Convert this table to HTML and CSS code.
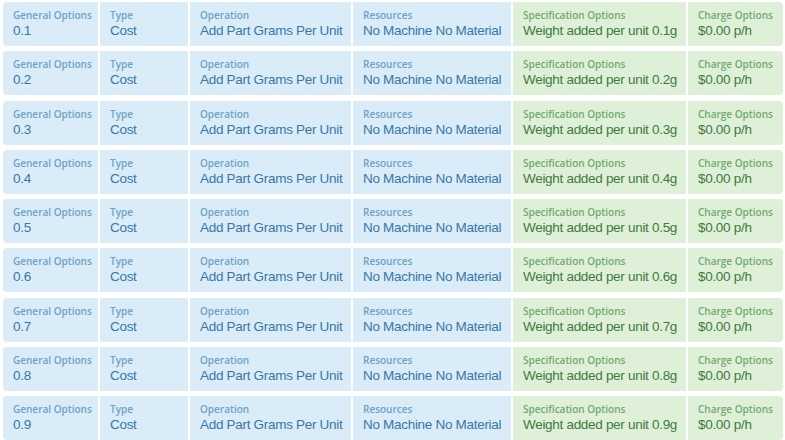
FILE: index.html
```html
<!DOCTYPE html>
<html>
<head>
<meta charset="utf-8">
<link rel="stylesheet" href="styles.css">
</head>
<body>
<div class="list" id="list"></div>
<script>
var rows = ["0.1","0.2","0.3","0.4","0.5","0.6","0.7","0.8","0.9"];
var html = "";
rows.forEach(function(v){
  html += '<div class="row">' +
    '<div class="cell info"><div class="lbl">General Options</div><div class="val">' + v + '</div></div>' +
    '<div class="cell info"><div class="lbl">Type</div><div class="val">Cost</div></div>' +
    '<div class="cell info"><div class="lbl">Operation</div><div class="val">Add Part Grams Per Unit</div></div>' +
    '<div class="cell info"><div class="lbl">Resources</div><div class="val">No Machine No Material</div></div>' +
    '<div class="cell ok"><div class="lbl">Specification Options</div><div class="val">Weight added per unit ' + v + 'g</div></div>' +
    '<div class="cell ok last"><div class="lbl">Charge Options</div><div class="val">$0.00 p/h</div></div>' +
    '</div>';
});
document.getElementById("list").innerHTML = html;
</script>
</body>
</html>
```
FILE: styles.css
```css
html, body { margin: 0; padding: 0; background: #fff; }
body { width: 785px; height: 440px; overflow: hidden; }
.list {
  display: flex;
  flex-direction: column;
  gap: 5.25px;
  padding: 2px 2px 0 3px;
}
.row {
  display: grid;
  grid-template-columns: 97px 90px 163px 160px 175px 95px;
  height: 44px;
  border-radius: 4px;
  overflow: hidden;
}
.cell {
  padding: 6px 0 0 10px;
  border-right: 2px solid #fff;
  box-sizing: border-box;
  white-space: nowrap;
  overflow: hidden;
}
.cell.last { border-right: none; }
.info { background: #d9ecf7; }
.ok { background: #dff0d8; }
.lbl {
  font-family: "Open Sans", "Liberation Sans", sans-serif;
  font-weight: 600;
  font-size: 10px;
  line-height: 14px;
}
.val {
  font-family: "Liberation Sans", Arial, sans-serif;
  font-size: 13.5px;
  letter-spacing: -0.3px;
  line-height: 18px;
}
.info .lbl { color: #6fa2c6; }
.info .val { color: #3878a8; }
.ok .lbl { color: #72a96e; }
.ok .val { color: #3e7a3e; }
```
